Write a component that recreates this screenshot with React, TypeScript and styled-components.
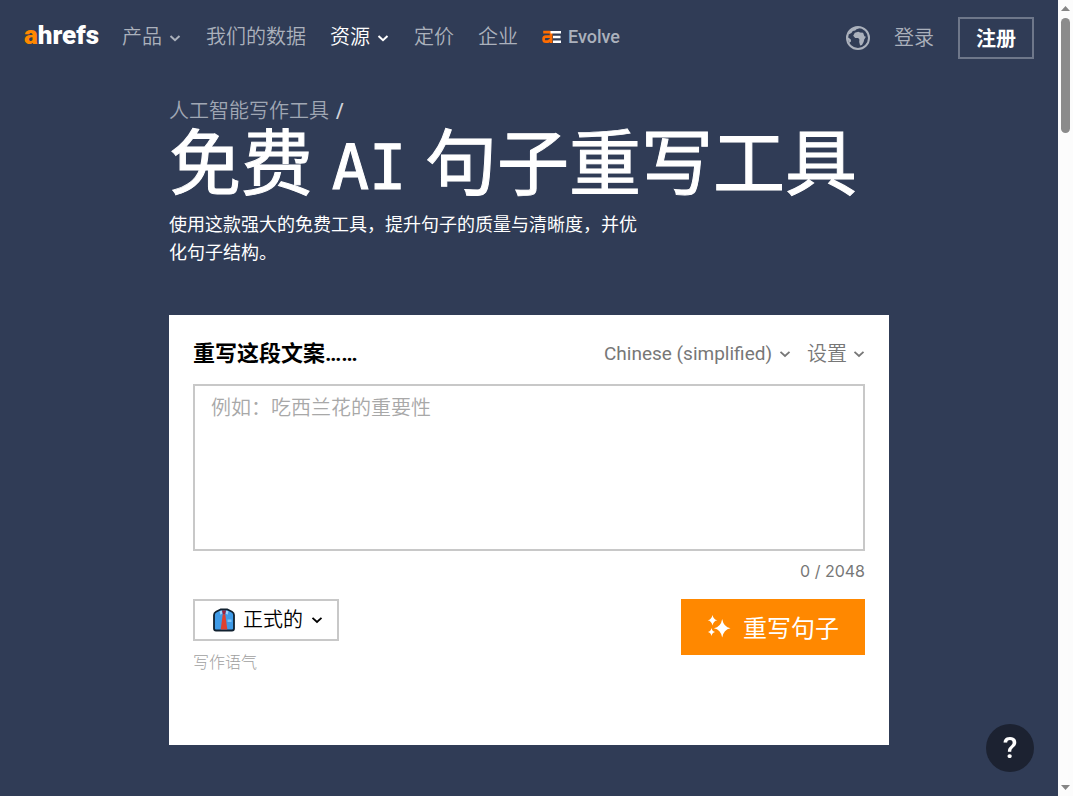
import React, { useState } from 'react';
import styled, { createGlobalStyle } from 'styled-components';

const cjk = "'Noto Sans CJK SC', sans-serif";

const GlobalStyle = createGlobalStyle`
  *, *::before, *::after { box-sizing: border-box; }
  body { margin: 0; background: #303c56; }
  body, button, select, textarea { font-family: Roboto, ${cjk}; }
  button, select { margin: 0; padding: 0; border: 0; background: none; color: inherit; cursor: pointer; }
  a { color: inherit; text-decoration: none; }
  h1, h2, p { margin: 0; }
`;

const Shell = styled.div`
  display: flex;
  min-height: 100vh;
  background: #303c56;
`;

const Page = styled.div`
  flex: 1;
  min-width: 0;
`;

const ScrollTrack = styled.div`
  position: sticky;
  top: 0;
  width: 15px;
  height: 100vh;
  padding: 6px 0;
  display: flex;
  flex-direction: column;
  align-items: center;
  gap: 7px;
  background: #fcfcfc;
`;

const ScrollThumb = styled.div`
  width: 9px;
  height: 115px;
  border-radius: 5px;
  background: #8b8b8b;
  margin-bottom: auto;
`;

const Header = styled.header`
  display: flex;
  justify-content: space-between;
  align-items: flex-start;
  padding: 17px 24px 0;
`;

const Nav = styled.nav`
  display: flex;
  align-items: center;
  gap: 24px;
  height: 40px;
`;

const Account = styled.div`
  display: flex;
  align-items: center;
  gap: 24px;
`;

const Logo = styled.a`
  width: 74px;
  margin-bottom: 4px;
  font: 900 26px/32px Roboto, sans-serif;
  color: #fff;
  span { color: #ff8800; }
`;

const navItem = `
  display: flex;
  align-items: center;
  gap: 6px;
  font-size: 20px;
  line-height: 28px;
  font-weight: 350;
  white-space: nowrap;
`;

const NavLink = styled.a`
  ${navItem}
  color: #abb1bc;
`;

const NavButton = styled.button<{ $active?: boolean }>`
  ${navItem}
  color: ${(p) => (p.$active ? '#fff' : '#abb1bc')};
`;

const EventName = styled.span`
  font: 500 18px/28px Roboto, sans-serif;
`;

const IconButton = styled.button`
  display: flex;
  color: #abb1bc;
`;

const SignUp = styled.a`
  height: 42px;
  padding: 0 16px;
  border: 2px solid #6e778a;
  color: #fff;
  font-size: 20px;
  line-height: 40px;
  font-weight: 700;
`;

const Main = styled.main`
  width: 100%;
  max-width: 720px;
  margin: 0 auto;
  padding: 38px 0 51px;
`;

const Breadcrumb = styled.nav`
  display: flex;
  gap: 7px;
  font-size: 20px;
  line-height: 28px;
  font-weight: 350;
  color: #a0a7b4;
  span { color: #d0d3da; font-weight: 500; }
`;

const Title = styled.h1`
  font: 400 72px/72px 'Noto Sans', ${cjk};
  color: #fff;
  -webkit-text-stroke: 1px #fff;
`;

const Mono = styled.span`
  font-family: 'DejaVu Sans Mono', monospace;
  font-size: 62px;
  line-height: 1;
`;

const Lead = styled.p`
  max-width: 480px;
  margin-top: 10px;
  font: 400 18px/28px ${cjk};
  color: #fff;
`;

const Card = styled.form`
  margin-top: 50px;
  padding: 24px 24px 72px;
  background: #fff;
`;

const CardHead = styled.div`
  display: flex;
  align-items: center;
  justify-content: space-between;
  height: 30px;
  margin-bottom: 15px;
`;

const CardTitle = styled.label`
  font-size: 22px;
  line-height: 28px;
  font-weight: 700;
  color: #000;
`;

const Options = styled.div`
  display: flex;
  align-items: center;
  gap: 16px;
  color: #777;
`;

const Picker = styled.div`
  display: flex;
  align-items: center;
  gap: 6px;
`;

const PlainSelect = styled.select<{ $size: number; $weight: number }>`
  appearance: none;
  font-size: ${(p) => p.$size}px;
  line-height: 28px;
  font-weight: ${(p) => p.$weight};
`;

const SettingsButton = styled.button`
  display: flex;
  align-items: center;
  gap: 6px;
  font-size: 20px;
  line-height: 28px;
  font-weight: 350;
`;

const Prompt = styled.textarea`
  display: block;
  width: 100%;
  height: 167px;
  padding: 7px 16px;
  border: 2px solid #c8c8c8;
  border-radius: 0;
  resize: none;
  outline: 0;
  font-family: ${cjk};
  font-size: 20px;
  line-height: 28px;
  font-weight: 350;
  &::placeholder { color: #a8a8a8; opacity: 1; }
`;

const Counter = styled.p`
  margin: 8px 0 16px;
  text-align: right;
  font: 400 16px/24px Inter, sans-serif;
  color: #777;
`;

const Actions = styled.div`
  display: flex;
  justify-content: space-between;
  align-items: flex-start;
`;

const ToneBox = styled.div`
  display: flex;
  align-items: center;
  gap: 8px;
  height: 42px;
  padding: 0 14px 0 18px;
  border: 2px solid #c8c8c8;
  color: #000;
`;

const ToneLabel = styled.label`
  display: block;
  margin-top: 8px;
  font: 300 16px/24px ${cjk};
  color: #a0a0a0;
`;

const Submit = styled.button`
  display: flex;
  align-items: center;
  gap: 12px;
  height: 56px;
  padding: 0 26px;
  background: #ff8800;
  color: #fff;
  font: 400 24px/32px ${cjk};
`;

const Help = styled.button`
  position: fixed;
  right: 39px;
  bottom: 24px;
  width: 48px;
  height: 48px;
  border-radius: 50%;
  background: #1c2231;
  color: #fff;
  font: 500 30px/48px Roboto, sans-serif;
`;

const Chevron = () => (
  <svg width="14" height="14" viewBox="0 0 14 14" fill="none" stroke="currentColor" strokeWidth="2" aria-hidden="true">
    <path d="M2.500 6l4.500 4.200L11.500 6" />
  </svg>
);

const SelectChevron = () => (
  <svg width="12" height="12" viewBox="0 0 12 12" fill="none" stroke="currentColor" strokeWidth="1.800" aria-hidden="true">
    <path d="M1.500 3.800L6 8l4.500-4.200" />
  </svg>
);

const Globe = () => (
  <svg width="24" height="24" viewBox="0 0 24 24" fill="currentColor" aria-hidden="true">
    <circle cx="12" cy="12" r="11" fill="none" stroke="currentColor" strokeWidth="2" />
    <path d="M2 8l2-4 4-2.500 4-.5 1.500 1.300-3 .9-1.300 1.300-2.400.5L5.400 7 3 8.200z" />
    <path d="M8.800 6.800l3.500-1 1.800.8 3 .2 1.300 3.400 1.500.6-1.700 2.700-.6 2.600-1.600 3-1.900.3-.9-3.400.2-2.600-1.200-1.400-3 .1-2-2.300z" />
    <path d="M1 11l1.700.8 2.300 2-.2 1.700-1.600 1.500z" />
  </svg>
);

const EvolveMark = () => (
  <svg width="20" height="14" viewBox="0 0 20 14" fill="none" aria-hidden="true">
    <path stroke="#ff6c00" strokeWidth="2.700" d="M1.200 2.200h6.400q1.500 0 1.500 1.500V13M9 6.700H3.800Q1.600 6.700 1.600 9v.5q0 2.200 2.200 2.200H6L9 9.500" />
    <path stroke="#fff" strokeWidth="2.400" d="M8.500 2.200H19M11 7h7.500M11 11.800h8" />
  </svg>
);

const Shirt = () => (
  <svg width="22" height="24" viewBox="0 0 22 24" aria-hidden="true">
    <path
      fill="#3f9be8"
      stroke="#10202f"
      strokeWidth="1.800"
      strokeLinejoin="round"
      d="M7.500 1.500h7l4.500 2.200q2 1 2 3.300v13.500q0 2-2 2H3q-2 0-2-2V7q0-2.300 2-3.300z"
    />
    <path fill="#9fd6fb" d="M6.500 3.300l2.300-.8.700 3-2 1.200zM15.500 3.300l-2.300-.8-.7 3 2 1.200z" />
    <path fill="#7dc4fa" d="M14.500 11.500h4v2.500h-4z" />
    <path fill="#9c2340" d="M9 2.400h4l-.9 4H9.900z" />
    <path fill="#e0412f" d="M9.700 6.400h2.600l2 15.200H7.700z" />
  </svg>
);

const Sparkles = () => (
  <svg width="24" height="24" viewBox="0 0 24 24" fill="#fff" aria-hidden="true">
    <path d="M15.200 4q1.400 8 8.300 9.300-6.900 1.300-8.300 9.300-1.400-8-8.300-9.300 6.900-1.300 8.300-9.300z" />
    <path d="M5.500 0q.9 4.600 4.800 5.300-3.900.7-4.800 5.300Q4.600 6 .7 5.300 4.600 4.600 5.500 0z" />
    <path d="M4.500 13q.7 3.400 3.600 4-2.900.6-3.600 4-.7-3.400-3.600-4 2.900-.6 3.600-4z" />
  </svg>
);

const Arrow = ({ down }: { down?: boolean }) => (
  <svg width="9" height="5" viewBox="0 0 9 5" fill="#858585" aria-hidden="true">
    <path d={down ? 'M0 0h9L4.500 5z' : 'M0 5h9L4.500 0z'} />
  </svg>
);

export default function App() {
  const [text, setText] = useState('');

  return (
    <Shell>
      <GlobalStyle />
      <Page>
        <Header>
          <Nav>
            <Logo href="#"><span>a</span>hrefs</Logo>
            <NavButton type="button">产品<Chevron /></NavButton>
            <NavLink href="#">我们的数据</NavLink>
            <NavButton type="button" $active>资源<Chevron /></NavButton>
            <NavLink href="#">定价</NavLink>
            <NavLink href="#">企业</NavLink>
            <NavLink href="#"><EvolveMark /><EventName>Evolve</EventName></NavLink>
          </Nav>
          <Account>
            <IconButton type="button" aria-label="语言"><Globe /></IconButton>
            <NavLink href="#">登录</NavLink>
            <SignUp href="#">注册</SignUp>
          </Account>
        </Header>
        <Main>
          <Breadcrumb><a href="#">人工智能写作工具</a><span>/</span></Breadcrumb>
          <Title>免费 <Mono>AI</Mono> 句子重写工具</Title>
          <Lead>使用这款强大的免费工具，提升句子的质量与清晰度，并优化句子结构。</Lead>
          <Card onSubmit={(e) => e.preventDefault()}>
            <CardHead>
              <CardTitle htmlFor="prompt">重写这段文案……</CardTitle>
              <Options>
                <Picker>
                  <PlainSelect $size={19} $weight={400} aria-label="语言">
                    <option>Chinese (simplified)</option>
                  </PlainSelect>
                  <SelectChevron />
                </Picker>
                <SettingsButton type="button">设置<SelectChevron /></SettingsButton>
              </Options>
            </CardHead>
            <Prompt
              id="prompt"
              maxLength={2048}
              placeholder="例如：吃西兰花的重要性"
              value={text}
              onChange={(e) => setText(e.target.value)}
            />
            <Counter>{text.length} / 2048</Counter>
            <Actions>
              <div>
                <ToneBox>
                  <Shirt />
                  <PlainSelect id="tone" $size={20} $weight={350}>
                    <option>正式的</option>
                  </PlainSelect>
                  <SelectChevron />
                </ToneBox>
                <ToneLabel htmlFor="tone">写作语气</ToneLabel>
              </div>
              <Submit type="submit"><Sparkles />重写句子</Submit>
            </Actions>
          </Card>
        </Main>
      </Page>
      <ScrollTrack aria-hidden="true">
        <Arrow />
        <ScrollThumb />
        <Arrow down />
      </ScrollTrack>
      <Help type="button" aria-label="帮助">?</Help>
    </Shell>
  );
}
